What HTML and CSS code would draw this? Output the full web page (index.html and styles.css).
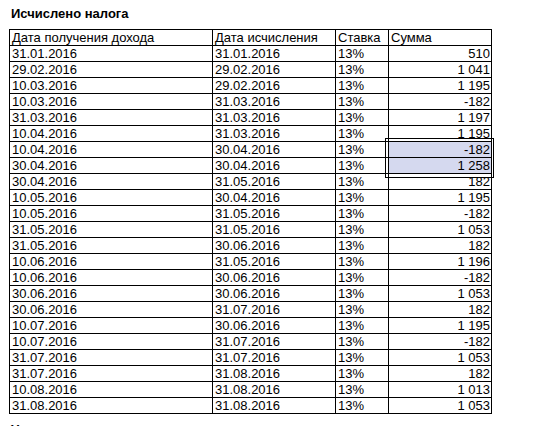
FILE: index.html
```html
<!DOCTYPE html>
<html lang="ru">
<head>
<meta charset="utf-8">
<title>Исчислено налога</title>
<link rel="stylesheet" href="styles.css">
</head>
<body>
<div class="page">
  <h2 class="title">Исчислено налога</h2>
  <table class="tax">
    <colgroup>
      <col class="c1"><col class="c2"><col class="c3"><col class="c4">
    </colgroup>
    <thead>
      <tr><th>Дата получения дохода</th><th>Дата исчисления</th><th>Ставка</th><th>Сумма</th></tr>
    </thead>
    <tbody>
      <tr><td>31.01.2016</td><td>31.01.2016</td><td>13%</td><td class="num">510</td></tr>
      <tr><td>29.02.2016</td><td>29.02.2016</td><td>13%</td><td class="num">1 041</td></tr>
      <tr><td>10.03.2016</td><td>29.02.2016</td><td>13%</td><td class="num">1 195</td></tr>
      <tr><td>10.03.2016</td><td>31.03.2016</td><td>13%</td><td class="num">-182</td></tr>
      <tr><td>31.03.2016</td><td>31.03.2016</td><td>13%</td><td class="num">1 197</td></tr>
      <tr><td>10.04.2016</td><td>31.03.2016</td><td>13%</td><td class="num">1 195</td></tr>
      <tr><td>10.04.2016</td><td>30.04.2016</td><td>13%</td><td class="num sel sel-first">-182</td></tr>
      <tr><td>30.04.2016</td><td>30.04.2016</td><td>13%</td><td class="num sel">1 258</td></tr>
      <tr><td>30.04.2016</td><td>31.05.2016</td><td>13%</td><td class="num">182</td></tr>
      <tr><td>10.05.2016</td><td>30.04.2016</td><td>13%</td><td class="num">1 195</td></tr>
      <tr><td>10.05.2016</td><td>31.05.2016</td><td>13%</td><td class="num">-182</td></tr>
      <tr><td>31.05.2016</td><td>31.05.2016</td><td>13%</td><td class="num">1 053</td></tr>
      <tr><td>31.05.2016</td><td>30.06.2016</td><td>13%</td><td class="num">182</td></tr>
      <tr><td>10.06.2016</td><td>31.05.2016</td><td>13%</td><td class="num">1 196</td></tr>
      <tr><td>10.06.2016</td><td>30.06.2016</td><td>13%</td><td class="num">-182</td></tr>
      <tr><td>30.06.2016</td><td>30.06.2016</td><td>13%</td><td class="num">1 053</td></tr>
      <tr><td>30.06.2016</td><td>31.07.2016</td><td>13%</td><td class="num">182</td></tr>
      <tr><td>10.07.2016</td><td>30.06.2016</td><td>13%</td><td class="num">1 195</td></tr>
      <tr><td>10.07.2016</td><td>31.07.2016</td><td>13%</td><td class="num">-182</td></tr>
      <tr><td>31.07.2016</td><td>31.07.2016</td><td>13%</td><td class="num">1 053</td></tr>
      <tr><td>31.07.2016</td><td>31.08.2016</td><td>13%</td><td class="num">182</td></tr>
      <tr><td>10.08.2016</td><td>31.08.2016</td><td>13%</td><td class="num">1 013</td></tr>
      <tr><td>31.08.2016</td><td>31.08.2016</td><td>13%</td><td class="num">1 053</td></tr>
    </tbody>
  </table>
  <h2 class="title next">Удержано налога</h2>
</div>
</body>
</html>
```

FILE: styles.css
```css
html, body {
  margin: 0;
  padding: 0;
  background: #fff;
}

.page {
  padding: 6px 0 0 9px;
  font-family: "Liberation Sans", Arial, sans-serif;
  font-size: 13px;
  color: #000;
}

.title {
  margin: 0 0 8px 2px;
  font-size: 13px;
  line-height: 15px;
  font-weight: bold;
}

.title.next {
  margin-top: 8px;
}

.tax {
  border-collapse: collapse;
  table-layout: fixed;
  width: 483px;
}

.c1 { width: 203px; }
.c2 { width: 123px; }
.c3 { width: 53px; }
.c4 { width: 103px; }

.tax th,
.tax td {
  border: 1px solid #000;
  padding: 0 1px 0 2px;
  font-weight: normal;
  text-align: left;
  line-height: 15px;
  height: 15px;
  white-space: nowrap;
  overflow: hidden;
}

.tax td.num {
  text-align: right;
}

.tax td.sel {
  background: #d5d9ef;
}

.tax td.sel-first {
  position: relative;
  overflow: visible;
}

.tax td.sel-first::after {
  content: "";
  position: absolute;
  left: -4px;
  right: -3px;
  top: -4px;
  height: 38px;
  border: 1px solid #000;
  pointer-events: none;
}
```
